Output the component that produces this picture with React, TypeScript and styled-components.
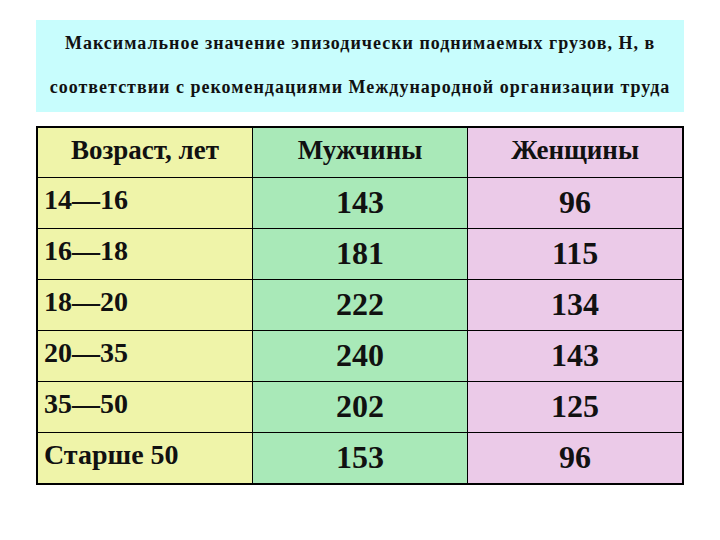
import styled, { createGlobalStyle } from 'styled-components'

const GlobalStyle = createGlobalStyle`
  html, body {
    margin: 0;
    padding: 0;
    background: #ffffff;
  }
  body {
    font-family: 'Liberation Serif', 'Times New Roman', serif;
    color: #111111;
  }
`

const Page = styled.div`
  width: 720px;
  height: 540px;
  box-sizing: border-box;
  padding: 20px 36px 0;
  display: flex;
  flex-direction: column;
  gap: 14px;
`

const Caption = styled.div`
  background: #c8fdfd;
  padding: 1px 0 3px;
  text-align: center;
  font-size: 18px;
  letter-spacing: 1px;
  font-weight: bold;
  line-height: 44px;
  white-space: nowrap;
`

const Table = styled.table`
  width: 648px;
  border-collapse: collapse;
  border: 2px solid #000;
  table-layout: fixed;
`

const colors = ['#eff4a9', '#a9e9b8', '#ebcae8']

const Th = styled.th<{ $col: number }>`
  background: ${(p) => colors[p.$col]};
  border: 1px solid #000;
  height: 45px;
  padding: 0 0 4px;
  font-size: 27px;
  font-weight: bold;
  text-align: center;
  vertical-align: middle;
  line-height: 1;
`

const Td = styled.td<{ $col: number }>`
  background: ${(p) => colors[p.$col]};
  border: 1px solid #000;
  height: ${(p) => (p.$col === 0 ? '44px' : '48px')};
  padding: ${(p) => (p.$col === 0 ? '0 0 6px 6px' : '0 0 2px')};
  font-size: ${(p) => (p.$col === 0 ? '28px' : '32px')};
  font-weight: bold;
  text-align: ${(p) => (p.$col === 0 ? 'left' : 'center')};
  vertical-align: middle;
  line-height: 1;
`

const rows = [
  ['14—16', '143', '96'],
  ['16—18', '181', '115'],
  ['18—20', '222', '134'],
  ['20—35', '240', '143'],
  ['35—50', '202', '125'],
  ['Старше 50', '153', '96'],
]

export default function App() {
  return (
    <>
      <GlobalStyle />
      <Page>
        <Caption>
          Максимальное значение эпизодически поднимаемых грузов, Н, в
          <br />
          соответствии с рекомендациями Международной организации труда
        </Caption>
        <Table>
          <thead>
            <tr>
              <Th $col={0}>Возраст, лет</Th>
              <Th $col={1}>Мужчины</Th>
              <Th $col={2}>Женщины</Th>
            </tr>
          </thead>
          <tbody>
            {rows.map((r) => (
              <tr key={r[0]}>
                {r.map((v, i) => (
                  <Td key={i} $col={i}>
                    {v}
                  </Td>
                ))}
              </tr>
            ))}
          </tbody>
        </Table>
      </Page>
    </>
  )
}
